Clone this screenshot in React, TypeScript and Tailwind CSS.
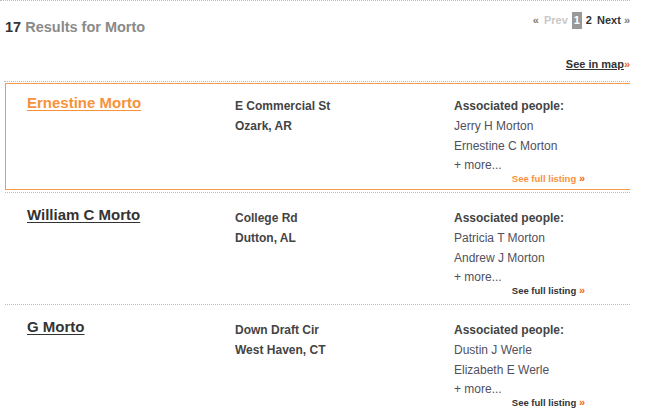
const results = [
  {
    name: 'Ernestine Morto',
    street: 'E Commercial St',
    city: 'Ozark, AR',
    people: ['Jerry H Morton', 'Ernestine C Morton'],
    active: true,
  },
  {
    name: 'William C Morto',
    street: 'College Rd',
    city: 'Dutton, AL',
    people: ['Patricia T Morton', 'Andrew J Morton'],
    active: false,
  },
  {
    name: 'G Morto',
    street: 'Down Draft Cir',
    city: 'West Haven, CT',
    people: ['Dustin J Werle', 'Elizabeth E Werle'],
    active: false,
  },
]

function Pager() {
  return (
    <div className="flex items-center h-[17px] text-[11px] font-bold leading-[17px]">
      <span className="text-[#777] mr-[5px]">«</span>
      <span className="text-[#c8c8c8] mr-[4px]">Prev</span>
      <span className="bg-[#999] text-white w-[10px] text-center mr-[4px]">1</span>
      <a href="#" className="text-[#333] mr-[5px]">2</a>
      <a href="#" className="text-[#333]">
        Next <span className="text-[#777]">»</span>
      </a>
    </div>
  )
}

function ResultRow({ r }: { r: (typeof results)[number] }) {
  // selected row gets the orange frame, open on the right
  const box = r.active
    ? 'flex h-[107px] border-l border-t border-b border-[#f39a4c]'
    : 'flex h-[107px] border-l border-t border-b border-transparent'
  return (
    <div>
      <div className={box}>
        <div className="w-[229px] pl-[21px] pt-[7px]">
          <a
            href="#"
            className={
              r.active
                ? 'text-[15px] leading-[18px] font-bold underline underline-offset-2 text-[#f7923a]'
                : 'text-[15px] leading-[18px] font-bold underline underline-offset-2 text-[#333]'
            }
          >
            {r.name}
          </a>
        </div>
        <div className="w-[219px] pt-[12px] text-[12px] font-bold leading-[20px] text-[#444]">
          <div>{r.street}</div>
          <div>{r.city}</div>
        </div>
        <div className="pt-[12px] text-[12px] leading-[20px] text-[#50505e]">
          <div className="font-bold text-[#444]">Associated people:</div>
          {r.people.map((p) => (
            <div key={p}>{p}</div>
          ))}
          <div className="leading-[19px]">+ more...</div>
          <div className="w-[131px] -mt-[2px] text-right text-[9.5px] leading-[10px] font-bold">
            <a href="#" className={r.active ? 'text-[#f7923a]' : 'text-[#333]'}>
              See full listing <span className="text-[#f26522] text-[11px]">»</span>
            </a>
          </div>
        </div>
      </div>
      <div className="mt-[2px] mb-[2px] border-t border-dotted border-[#bbb]" />
    </div>
  )
}

export default function App() {
  return (
    <div className="w-[650px] h-[416px] bg-white overflow-hidden font-['Liberation_Sans',Arial,sans-serif]">
      <div className="w-[630px] border-t border-dotted border-[#bbb]" />
      <div className="w-[630px] pl-[5px] h-[80px] flex flex-col">
        <div className="flex justify-between items-start pt-[11px]">
          <h1 className="mt-[7px] text-[14.5px] leading-[17px] font-bold text-[#8a8a8a]">
            <span className="text-[#333]">17</span> Results for Morto
          </h1>
          <Pager />
        </div>
        <div className="mt-auto mb-[10px] text-right text-[11px] leading-[14px] font-bold">
          <a href="#" className="text-[#333] underline">See in map</a>
          <span className="text-[#f26522]">»</span>
        </div>
      </div>
      <div className="ml-[4px] w-[626px] border-t border-dotted border-[#bbb] mb-[1px]" />
      <div className="ml-[5px] w-[625px]">
        {results.map((r) => (
          <ResultRow key={r.name} r={r} />
        ))}
      </div>
    </div>
  )
}
